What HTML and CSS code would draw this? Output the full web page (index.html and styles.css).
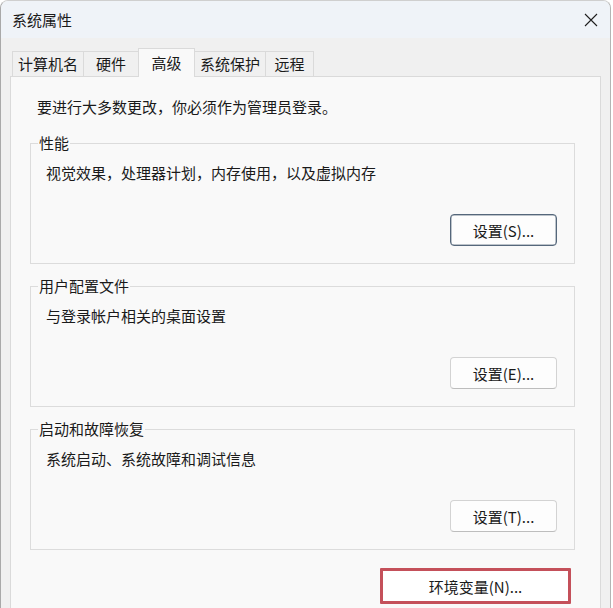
FILE: index.html
```html
<!DOCTYPE html>
<html lang="zh-CN">
<head>
<meta charset="utf-8">
<title>系统属性</title>
<link rel="stylesheet" href="styles.css">
</head>
<body>
<div class="window">
  <div class="titlebar">
    <span class="title">系统属性</span>
    <svg class="close" width="14" height="14" viewBox="0 0 14 14" aria-label="关闭">
      <path d="M1 1 L13 13 M13 1 L1 13" stroke="#1f1f1f" stroke-width="1.1" fill="none"/>
    </svg>
  </div>
  <div class="tabs">
    <div class="tab tab-4">计算机名</div>
    <div class="tab tab-2">硬件</div>
    <div class="tab tab-2 active">高级</div>
    <div class="tab tab-4">系统保护</div>
    <div class="tab tab-2 tab-last">远程</div>
  </div>
  <div class="panel">
    <p class="note">要进行大多数更改，你必须作为管理员登录。</p>
    <fieldset class="group">
      <legend>性能</legend>
      <p class="desc">视觉效果，处理器计划，内存使用，以及虚拟内存</p>
      <div class="actions"><button class="btn btn-default">设置(S)...</button></div>
    </fieldset>
    <fieldset class="group">
      <legend>用户配置文件</legend>
      <p class="desc">与登录帐户相关的桌面设置</p>
      <div class="actions"><button class="btn">设置(E)...</button></div>
    </fieldset>
    <fieldset class="group">
      <legend>启动和故障恢复</legend>
      <p class="desc">系统启动、系统故障和调试信息</p>
      <div class="actions"><button class="btn">设置(T)...</button></div>
    </fieldset>
    <div class="footer">
      <button class="btn btn-env">环境变量(N)...</button>
    </div>
  </div>
</div>
</body>
</html>
```
FILE: styles.css
```css
html, body {
  margin: 0;
  padding: 0;
  overflow: hidden;
  background: #ffffff;
}
body {
  font-family: "Noto Sans CJK SC", "Noto Sans", sans-serif;
  font-size: 15px;
  color: #1a1a1a;
}
.window {
  box-sizing: border-box;
  width: 611px;
  height: 620px;
  border-top: 1px solid #cfcfcf;
  border-left: 1px solid #a9a9a9;
  border-right: 1px solid #b4b4b4;
  border-radius: 8px 8px 0 0;
  background: #f0f0f0;
  display: flex;
  flex-direction: column;
  overflow: hidden;
}
.titlebar {
  height: 37px;
  flex: none;
  display: flex;
  align-items: center;
  justify-content: space-between;
  padding: 0 11px 0 11px;
  background: #eff3f8;
}
.title {
  line-height: 20px;
}
.close {
  display: block;
  margin-right: 1px;
}
.tabs {
  flex: none;
  display: flex;
  align-items: flex-end;
  height: 28px;
  margin-top: 10px;
  padding-left: 11px;
  position: relative;
  z-index: 1;
}
.tab {
  box-sizing: border-box;
  height: 25px;
  line-height: 24px;
  border: 1px solid #dadada;
  border-bottom: none;
  border-right: none;
  background: #f0f0f0;
  text-align: center;
  white-space: nowrap;
}
.tab-4 { width: 71px; }
.tab-2 { width: 55px; }
.tab-last { width: 49px; border-right: 1px solid #dadada; }
.tab.active {
  height: 29px;
  width: 57px;
  margin-bottom: -1px;
  margin-right: -1px;
  border: 1px solid #dadada;
  border-bottom: none;
  background: #f9f9f9;
  line-height: 28px;
  position: relative;
  z-index: 2;
}
.tab.active + .tab {
  border-left: none;
  padding-left: 1px;
}
.panel {
  flex: 1;
  margin: 0 9px 0 9px;
  border: 1px solid #dadada;
  border-bottom: none;
  background: #f9f9f9;
  padding: 20px 25px 0 19px;
  display: flex;
  flex-direction: column;
}
.note {
  margin: 0 0 16px 7px;
  line-height: 20px;
}
.group {
  margin: 0 0 12px 0;
  padding: 0 17px 17px 7px;
  border: 1px solid #dcdcdc;
  min-width: 0;
}
.group legend {
  padding: 0 1px;
  line-height: 20px;
}
.desc {
  margin: 10px 0 0 8px;
  line-height: 20px;
}
.actions {
  display: flex;
  justify-content: flex-end;
  margin-top: 31px;
}
.btn {
  box-sizing: border-box;
  width: 107px;
  height: 32px;
  font-family: inherit;
  font-size: 15px;
  color: #1a1a1a;
  background: #fdfdfd;
  border: 1px solid #d3d3d3;
  border-bottom-color: #bdbdbd;
  border-radius: 4px;
  padding: 0;
}
.btn-default {
  border: 1px solid #55677b;
  box-shadow: inset 0 0 0 0.5px #7d8a98;
}
.footer {
  display: flex;
  justify-content: flex-end;
  margin-top: 6px;
  padding-right: 4px;
}
.btn-env {
  width: 191px;
  height: 36px;
  border: 3px solid #c4505a;
  border-radius: 1px;
  background: #ffffff;
}
```
